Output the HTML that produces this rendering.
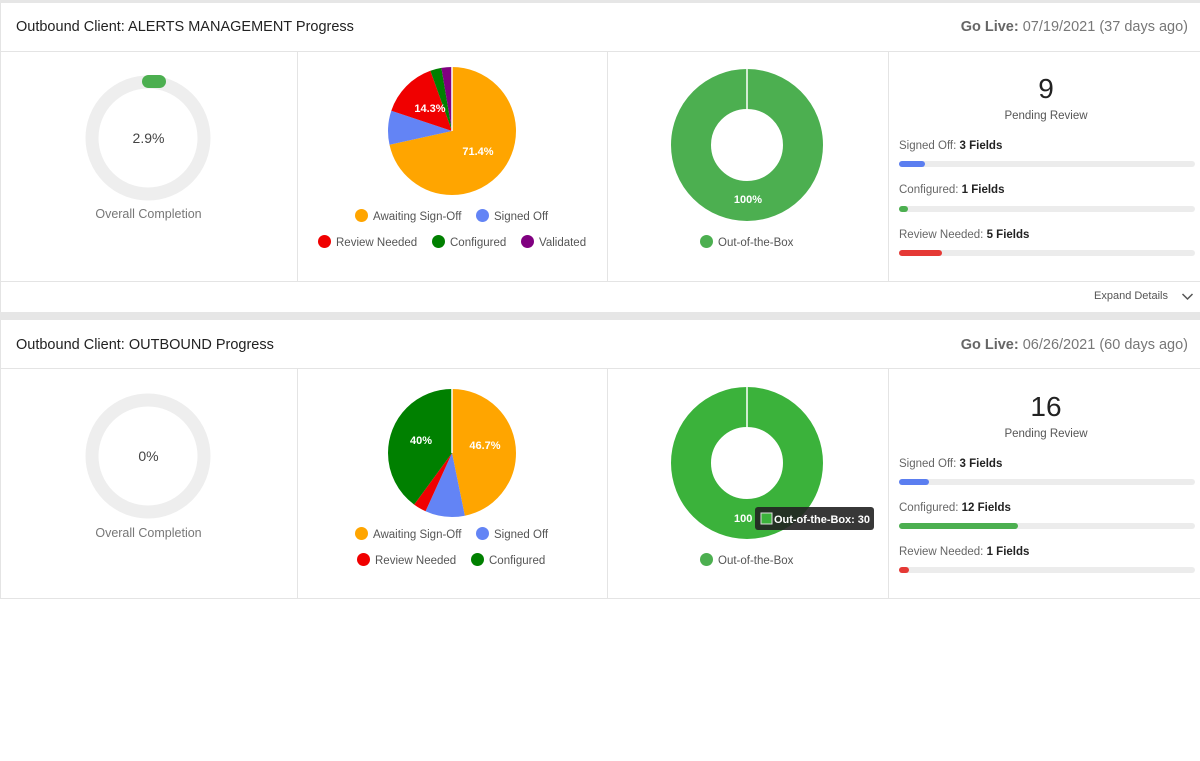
<!DOCTYPE html>
<html><head><meta charset="utf-8"><style>
*{margin:0;padding:0;box-sizing:border-box}
body{width:1200px;height:761px;background:#fff;font-family:"Liberation Sans",Arial,sans-serif;position:relative;overflow:hidden}
.a{position:absolute}
.t{font-size:14.5px;color:#222}
.gl{font-size:14.5px;color:#777}
.gl b{color:#666}
.hl{background:#e4e4e4;height:1px}
.vl{background:#e4e4e4;width:1px}
.lg{font-size:11.5px;color:#555;white-space:nowrap}
.dot{display:inline-block;width:13px;height:13px;border-radius:50%;vertical-align:-2px;margin-right:5px}
.lab{font-size:11.5px;color:#666}
.lab b{color:#222}
.bar{height:6px;border-radius:3px;background:#ececec;width:296px}
.bar i{display:block;height:6px;border-radius:3px}
</style></head><body>
<div class="a" style="left:0;top:0;width:1200px;height:3px;background:#e6e6e6"></div>
<div class="a" style="left:0;top:312px;width:1200px;height:8px;background:#e6e6e6"></div>
<div class="a vl" style="left:0;top:3px;height:309px"></div>
<div class="a vl" style="left:0;top:320px;height:279px"></div>

<!-- Card 1 -->
<div class="a t" style="left:16px;top:19px">Outbound Client: ALERTS MANAGEMENT Progress</div>
<div class="a gl" style="right:12px;top:19px"><b>Go Live:</b> 07/19/2021 (37 days ago)</div>
<div class="a hl" style="left:0;top:51px;width:1200px"></div>
<div class="a hl" style="left:0;top:281px;width:1200px"></div>
<div class="a vl" style="left:297px;top:51px;height:230px"></div>
<div class="a vl" style="left:607px;top:51px;height:230px"></div>
<div class="a vl" style="left:888px;top:51px;height:230px"></div>

<svg class="a" style="left:0;top:0" width="1200" height="761">
 <circle cx="148" cy="138" r="56" fill="none" stroke="#eeeeee" stroke-width="13"/>
 <rect x="142" y="75" width="24" height="13" rx="6.5" fill="#4caf50"/>
 <g transform="translate(452,131) rotate(-90)">
  <circle r="32" fill="none" stroke="#ffa500" stroke-width="64" stroke-dasharray="143.6 201.1"/>
  <circle r="32" fill="none" stroke="#6384f5" stroke-width="64" stroke-dasharray="17.3 201.1" stroke-dashoffset="-143.6"/>
  <circle r="32" fill="none" stroke="#f00000" stroke-width="64" stroke-dasharray="28.8 201.1" stroke-dashoffset="-160.9"/>
  <circle r="32" fill="none" stroke="#008000" stroke-width="64" stroke-dasharray="5.7 201.1" stroke-dashoffset="-189.7"/>
  <circle r="32" fill="none" stroke="#800080" stroke-width="64" stroke-dasharray="5.7 201.1" stroke-dashoffset="-195.4"/>
 </g>
 <line x1="452" y1="131" x2="452" y2="67" stroke="#fff" stroke-width="1.5"/>
 <text x="478" y="155" fill="#fff" font-size="11" font-weight="bold" text-anchor="middle" font-family="Liberation Sans">71.4%</text>
 <text x="430" y="112" fill="#fff" font-size="11" font-weight="bold" text-anchor="middle" font-family="Liberation Sans">14.3%</text>
 <circle cx="747" cy="145" r="56" fill="none" stroke="#4caf50" stroke-width="40"/>
 <line x1="747" y1="68" x2="747" y2="110" stroke="#fff" stroke-width="1.5"/>
 <text x="748" y="203" fill="#fff" font-size="11" font-weight="bold" text-anchor="middle" font-family="Liberation Sans">100%</text>

 <circle cx="148" cy="456" r="56" fill="none" stroke="#eeeeee" stroke-width="13"/>
 <g transform="translate(452,453) rotate(-90)">
  <circle r="32" fill="none" stroke="#ffa500" stroke-width="64" stroke-dasharray="93.9 201.1"/>
  <circle r="32" fill="none" stroke="#6384f5" stroke-width="64" stroke-dasharray="20.1 201.1" stroke-dashoffset="-93.9"/>
  <circle r="32" fill="none" stroke="#f00000" stroke-width="64" stroke-dasharray="6.6 201.1" stroke-dashoffset="-114"/>
  <circle r="32" fill="none" stroke="#008000" stroke-width="64" stroke-dasharray="80.5 201.1" stroke-dashoffset="-120.6"/>
 </g>
 <line x1="452" y1="453" x2="452" y2="389" stroke="#fff" stroke-width="1.5"/>
 <text x="485" y="449" fill="#fff" font-size="11" font-weight="bold" text-anchor="middle" font-family="Liberation Sans">46.7%</text>
 <text x="421" y="444" fill="#fff" font-size="11" font-weight="bold" text-anchor="middle" font-family="Liberation Sans">40%</text>
 <circle cx="747" cy="463" r="56" fill="none" stroke="#3bb23b" stroke-width="40"/>
 <line x1="747" y1="386" x2="747" y2="428" stroke="#fff" stroke-width="1.5"/>
 <text x="734" y="522" fill="#fff" font-size="11" font-weight="bold" font-family="Liberation Sans">100</text>
 <rect x="755" y="507" width="119" height="23" rx="3" fill="#222" opacity="0.9"/>
 <rect x="761" y="513" width="11" height="11" fill="#3bb23b" stroke="#ddd" stroke-width="1"/>
 <text x="774" y="523" fill="#fff" font-size="11" font-weight="bold" font-family="Liberation Sans" textLength="96">Out-of-the-Box: 30</text>
</svg>

<div class="a lab" style="left:0;width:297px;top:207px;text-align:center;font-size:12.5px;color:#777">Overall Completion</div>
<div class="a" style="left:0;width:297px;top:130px;text-align:center;font-size:14px;color:#444">2.9%</div>
<div class="a lg" style="left:355px;top:209px"><span class="dot" style="background:#ffa500"></span>Awaiting Sign-Off</div>
<div class="a lg" style="left:476px;top:209px"><span class="dot" style="background:#6384f5"></span>Signed Off</div>
<div class="a lg" style="left:318px;top:235px"><span class="dot" style="background:#f00000"></span>Review Needed</div>
<div class="a lg" style="left:432px;top:235px"><span class="dot" style="background:#008000"></span>Configured</div>
<div class="a lg" style="left:521px;top:235px"><span class="dot" style="background:#800080"></span>Validated</div>
<div class="a lg" style="left:700px;top:235px"><span class="dot" style="background:#4caf50"></span>Out-of-the-Box</div>

<div class="a" style="left:888px;width:316px;top:73px;text-align:center;font-size:28px;color:#222">9</div>
<div class="a lab" style="left:888px;width:316px;top:110px;text-align:center;color:#555">Pending Review</div>
<div class="a lab" style="left:899px;top:140px">Signed Off: <b>3 Fields</b></div>
<div class="a bar" style="left:899px;top:161px"><i style="width:26px;background:#5b7ef0"></i></div>
<div class="a lab" style="left:899px;top:184px">Configured: <b>1 Fields</b></div>
<div class="a bar" style="left:899px;top:206px"><i style="width:9px;background:#4caf50"></i></div>
<div class="a lab" style="left:899px;top:229px">Review Needed: <b>5 Fields</b></div>
<div class="a bar" style="left:899px;top:250px"><i style="width:43px;background:#e53935"></i></div>

<div class="a" style="left:1094px;top:290px;font-size:11px;color:#555">Expand Details</div>
<svg class="a" style="left:1181px;top:292px" width="13" height="9"><path d="M1.5 2 L6.5 7 L11.5 2" fill="none" stroke="#555" stroke-width="1.5"/></svg>

<!-- Card 2 -->
<div class="a t" style="left:16px;top:337px">Outbound Client: OUTBOUND Progress</div>
<div class="a gl" style="right:12px;top:337px"><b>Go Live:</b> 06/26/2021 (60 days ago)</div>
<div class="a hl" style="left:0;top:368px;width:1200px"></div>
<div class="a hl" style="left:0;top:598px;width:1200px"></div>
<div class="a vl" style="left:297px;top:368px;height:230px"></div>
<div class="a vl" style="left:607px;top:368px;height:230px"></div>
<div class="a vl" style="left:888px;top:368px;height:230px"></div>

<div class="a lab" style="left:0;width:297px;top:526px;text-align:center;font-size:12.5px;color:#777">Overall Completion</div>
<div class="a" style="left:0;width:297px;top:448px;text-align:center;font-size:14px;color:#444">0%</div>
<div class="a lg" style="left:355px;top:527px"><span class="dot" style="background:#ffa500"></span>Awaiting Sign-Off</div>
<div class="a lg" style="left:476px;top:527px"><span class="dot" style="background:#6384f5"></span>Signed Off</div>
<div class="a lg" style="left:357px;top:553px"><span class="dot" style="background:#f00000"></span>Review Needed</div>
<div class="a lg" style="left:471px;top:553px"><span class="dot" style="background:#008000"></span>Configured</div>
<div class="a lg" style="left:700px;top:553px"><span class="dot" style="background:#4caf50"></span>Out-of-the-Box</div>

<div class="a" style="left:888px;width:316px;top:391px;text-align:center;font-size:28px;color:#222">16</div>
<div class="a lab" style="left:888px;width:316px;top:428px;text-align:center;color:#555">Pending Review</div>
<div class="a lab" style="left:899px;top:458px">Signed Off: <b>3 Fields</b></div>
<div class="a bar" style="left:899px;top:479px"><i style="width:30px;background:#5b7ef0"></i></div>
<div class="a lab" style="left:899px;top:502px">Configured: <b>12 Fields</b></div>
<div class="a bar" style="left:899px;top:523px"><i style="width:119px;background:#4caf50"></i></div>
<div class="a lab" style="left:899px;top:546px">Review Needed: <b>1 Fields</b></div>
<div class="a bar" style="left:899px;top:567px"><i style="width:10px;background:#e53935"></i></div>
</body></html>
